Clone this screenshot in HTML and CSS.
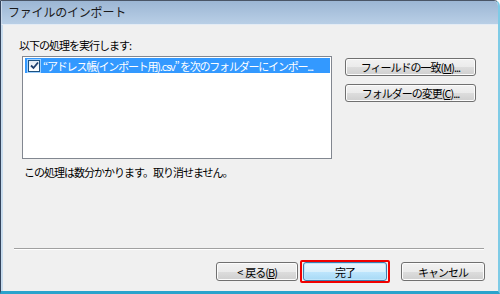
FILE: index.html
```html
<!DOCTYPE html>
<html lang="ja">

<head>
  <meta charset="UTF-8">
  <title>ファイルのインポート</title>
  <link rel="stylesheet" href="styles.css">
</head>

<body>

  <div class="window">
    <div class="titlebar">ファイルのインポート</div>

    <div class="content">
      <div class="main">
        <div class="left">
          <div class="label">以下の処理を実行します:</div>
          <div class="listbox">
            <div class="row">
              <span class="check">
                <svg width="9" height="9" viewBox="0 0 9 9">
                  <path d="M1 4.5 L3.5 7 L8 1.5" fill="none" stroke="#1c3f6e" stroke-width="1.8" />
                </svg>
              </span>
              <span class="row-text">“アドレス帳(インポート用).csv” を次のフォルダーにインポー...</span>
            </div>
          </div>
          <div class="note">この処理は数分かかります。取り消せません。</div>
        </div>

        <div class="side">
          <button class="btn wide">フィールドの一致(<u>M</u>)...</button>
          <button class="btn wide">フォルダーの変更(<u>C</u>)...</button>
        </div>
      </div>

      <div class="separator"></div>

      <div class="footer">
        <button class="btn">&lt;&nbsp; 戻る(<u>B</u>)</button>
        <span class="highlight"><button class="btn default">完了</button></span>
        <button class="btn cancel">キャンセル</button>
      </div>
    </div>
  </div>

</body>

</html>
```

FILE: styles.css
```css
body {
  margin: 0;
  font-family: "Noto Sans CJK JP", "Liberation Sans", sans-serif;
  font-size: 11px;
  letter-spacing: -1px;
  color: #000;
  background: #fff;
}

.window {
  width: 500px;
  height: 294px;
  box-sizing: border-box;
  display: flex;
  flex-direction: column;
  border-left: 1px solid #34445c;
  border-top: 1px solid #4a5566;
  border-right: 2px solid #7fcbe6;
  border-bottom: 3px solid #2aa3cc;
  border-top-right-radius: 6px;
  overflow: hidden;
}

.titlebar {
  height: 23px;
  line-height: 22px;
  padding-left: 6px;
  font-size: 12px;
  letter-spacing: -0.2px;
  color: #1a1a1a;
  background: linear-gradient(#9cb6d4, #b9cfe6);
  border-bottom: 1px solid #e4ecf5;
  border-left: 1px solid #c9d8ea;
}

.content {
  flex: 1;
  display: flex;
  flex-direction: column;
  background: #f0f0f0;
  border-left: 2px solid #c8dcee;
  padding-top: 13px;
}

.main {
  flex: 1;
  display: flex;
}

.left {
  padding-left: 16px;
}

.label {
  line-height: 15px;
  margin-bottom: 3px;
}

.listbox {
  width: 305px;
  height: 100px;
  margin-left: 3px;
  border: 1px solid #828790;
  background: #fff;
  padding: 1px 1px 0 2px;
}

.row {
  display: flex;
  align-items: center;
  height: 15px;
  background: #3399ff;
  color: #fff;
}

.check {
  display: flex;
  align-items: center;
  justify-content: center;
  width: 10px;
  height: 10px;
  margin: 0 3px 0 3px;
  border: 1px solid #1c5180;
  background: linear-gradient(#dfeaf5, #fff);
  box-shadow: 0 0 0 1px #9fd0ff;
}

.row-text {
  flex: 1;
  white-space: nowrap;
  letter-spacing: -1.2px;
}

.note {
  margin-top: 6px;
  margin-left: 5px;
  line-height: 14px;
}

.side {
  display: flex;
  flex-direction: column;
  gap: 8px;
  padding-top: 20px;
  margin-left: 13px;
}

.btn {
  font-family: inherit;
  font-size: 11px;
  letter-spacing: -1px;
  white-space: nowrap;
  color: #000;
  height: 19px;
  width: 82px;
  padding: 0;
  border: 1px solid #707070;
  border-radius: 3px;
  background: linear-gradient(#f2f2f2 0%, #ebebeb 50%, #dddddd 51%, #cfcfcf 100%);
  box-shadow: inset 0 0 0 1px #fcfcfc;
  cursor: pointer;
}

.btn.wide {
  width: 131px;
  height: 18px;
}

.btn.default {
  width: 84px;
  border-color: #3c7fb1;
  background: linear-gradient(#eaf6fd 0%, #d9f0fc 50%, #bee6fd 51%, #a7d9f5 100%);
  box-shadow: inset 0 0 0 1px #bfe4f9;
}

.btn.cancel {
  width: 84px;
}

.separator {
  margin: 0 14px 0 11px;
  border-top: 1px solid #a0a0a0;
  border-bottom: 1px solid #fff;
}

.footer {
  display: flex;
  align-items: center;
  justify-content: flex-end;
  padding: 10px 13px 8px 0;
}

.highlight {
  display: flex;
  margin-left: 2px;
  padding: 0 1px;
  border: 2px solid #f00000;
  border-radius: 2px;
  margin-right: 11px;
}
```
